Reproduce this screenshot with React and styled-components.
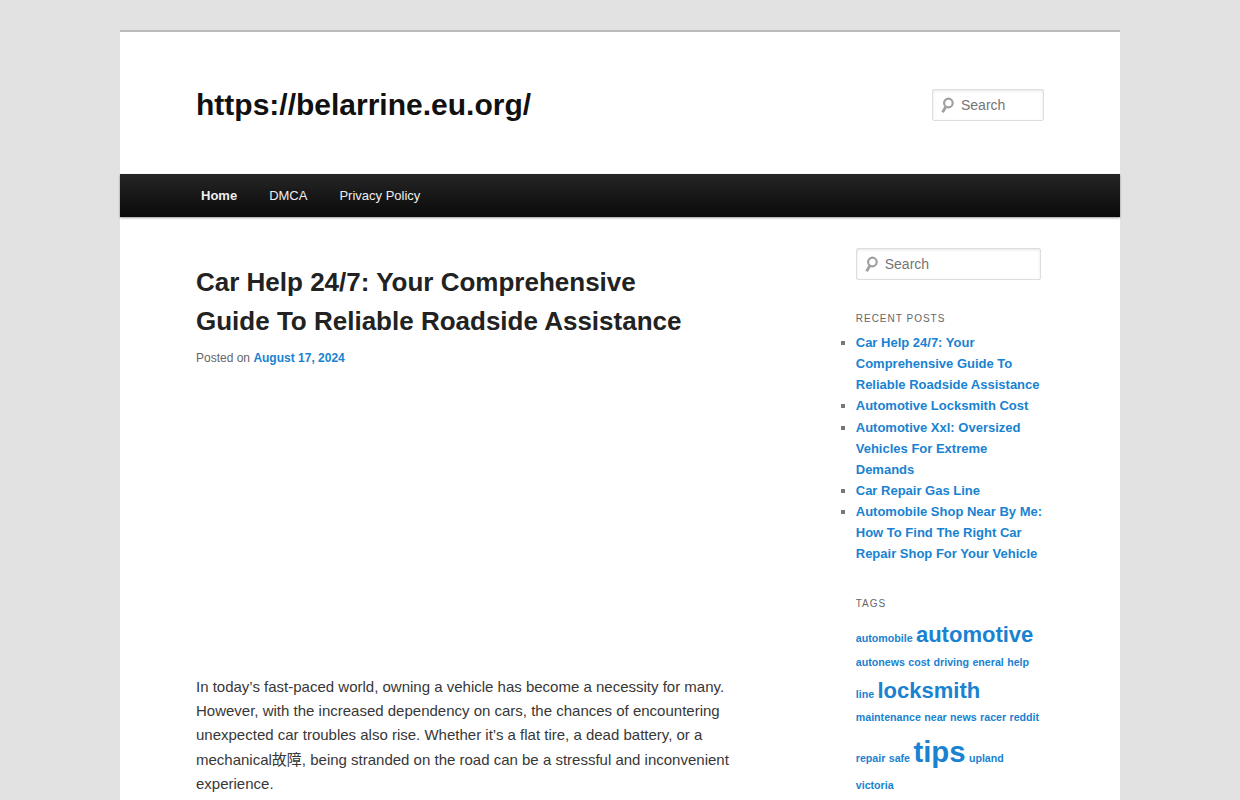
import styled, { createGlobalStyle } from "styled-components";

const recentPosts = [
  "Car Help 24/7: Your Comprehensive Guide To Reliable Roadside Assistance",
  "Automotive Locksmith Cost",
  "Automotive Xxl: Oversized Vehicles For Extreme Demands",
  "Car Repair Gas Line",
  "Automobile Shop Near By Me: How To Find The Right Car Repair Shop For Your Vehicle",
];

// sizes are in pt, the way the tag cloud weighs its terms
const tags = [
  { name: "automobile", size: 8 },
  { name: "automotive", size: 16.5 },
  { name: "autonews", size: 8 },
  { name: "cost", size: 8 },
  { name: "driving", size: 8 },
  { name: "eneral", size: 8 },
  { name: "help", size: 8 },
  { name: "line", size: 8 },
  { name: "locksmith", size: 16.5 },
  { name: "maintenance", size: 8 },
  { name: "near", size: 8 },
  { name: "news", size: 8 },
  { name: "racer", size: 8 },
  { name: "reddit", size: 8 },
  { name: "repair", size: 8 },
  { name: "safe", size: 8 },
  { name: "tips", size: 22 },
  { name: "upland", size: 8 },
  { name: "victoria", size: 8 },
];

const GlobalStyle = createGlobalStyle`
  * {
    box-sizing: border-box;
  }

  body {
    margin: 0;
    padding: 0 30px;
    background: #e2e2e2;
    color: #373737;
    font-family: "Liberation Sans", Arial, "Noto Sans CJK SC", sans-serif;
    font-size: 15px;
    line-height: 1.625;
  }
`;

const Page = styled.div`
  max-width: 1000px;
  margin: 30px auto;
  background: #fff;
`;

const Branding = styled.header`
  display: flex;
  justify-content: space-between;
  align-items: flex-start;
  padding: 55px 7.6% 51px;
  border-top: 2px solid #bbb;
`;

const SiteTitle = styled.h1`
  margin: 0;
  font-size: 30px;
  line-height: 36px;

  a {
    color: #111;
    text-decoration: none;
  }
`;

const SearchForm = styled.form`
  display: grid;
  align-items: center;
  width: ${(props) => props.$width};
  margin-top: ${(props) => props.$top || "0"};
`;

const SearchIcon = styled.svg`
  grid-area: 1 / 1;
  margin-left: 9px;
  pointer-events: none;
`;

const SearchInput = styled.input`
  grid-area: 1 / 1;
  width: 100%;
  height: 32px;
  padding: 4px 10px 4px 28px;
  border: 1px solid #ddd;
  border-radius: 2px;
  background: #fff;
  box-shadow: inset 0 1px 3px rgba(0, 0, 0, 0.1);
  color: #373737;
  font-family: inherit;
  font-size: 14px;

  &::placeholder {
    color: #757575;
  }
`;

const Nav = styled.nav`
  position: relative;
  padding: 0 7.6%;
  background: linear-gradient(#252525, #0a0a0a);
  box-shadow: rgba(0, 0, 0, 0.4) 0 1px 2px;
`;

const Menu = styled.ul`
  display: flex;
  margin: 0 0 0 -11px;
  padding: 0;
  list-style: none;
`;

const MenuLink = styled.a`
  display: block;
  padding: 0 16px;
  color: #eee;
  font-size: 13px;
  font-weight: ${(props) => (props.$current ? "bold" : "normal")};
  line-height: 43px;
  text-decoration: none;
`;

const Main = styled.div`
  display: flex;
  justify-content: space-between;
  padding: 31px 7.6% 24px;
`;

const Article = styled.article`
  width: 69%;
  padding-top: 15px;
`;

const EntryTitle = styled.h2`
  margin: 0;
  padding-right: 76px;
  color: #222;
  font-size: 26px;
  line-height: 39px;
`;

const EntryMeta = styled.div`
  margin-top: 5px;
  color: #666;
  font-size: 12px;
  line-height: 24px;
`;

const Link = styled.a`
  color: #1982d1;
  font-weight: bold;
  text-decoration: none;

  &:hover {
    text-decoration: underline;
  }
`;

const Video = styled.div`
  aspect-ratio: 2;
  margin: 0 0 12px;
`;

const Paragraph = styled.p`
  margin: 0 0 24px;
`;

const Sidebar = styled.aside`
  width: 22.2%;
  font-size: 13px;
`;

const Widget = styled.section`
  margin-top: 28px;

  & + & {
    margin-top: 29px;
  }
`;

const WidgetTitle = styled.h3`
  margin: 0 0 3px;
  color: #666;
  font-size: 10px;
  font-weight: 500;
  letter-spacing: 1px;
  line-height: 21px;
  text-transform: uppercase;
`;

const PostList = styled.ul`
  margin: 0;
  padding: 0;
  color: #777;
  list-style: square;
`;

const TagCloud = styled.div`
  font-size: 12px;
`;

const TagLink = styled(Link)`
  font-size: ${(props) => props.$size}pt;
`;

function Search({ id, width, top }) {
  return (
    <SearchForm role="search" $width={width} $top={top}>
      <SearchInput id={id} type="text" placeholder="Search" aria-label="Search" />
      <SearchIcon width="14" height="18" viewBox="0 0 14 18" fill="none" stroke="#a0a0a0">
        <circle cx="7.4" cy="7" r="4.3" strokeWidth="2.2" />
        <path d="M5 10.6 L1.6 16.2" strokeWidth="2.8" />
      </SearchIcon>
    </SearchForm>
  );
}

export default function App() {
  return (
    <>
      <GlobalStyle />
      <Page>
        <Branding>
          <SiteTitle>
            <a href="#home">https://belarrine.eu.org/</a>
          </SiteTitle>
          <Search id="header-search" width="112px" top="2px" />
        </Branding>

        <Nav>
          <Menu>
            <li><MenuLink href="#home" $current>Home</MenuLink></li>
            <li><MenuLink href="#dmca">DMCA</MenuLink></li>
            <li><MenuLink href="#privacy">Privacy Policy</MenuLink></li>
          </Menu>
        </Nav>

        <Main>
          <Article>
            <EntryTitle>
              Car Help 24/7: Your Comprehensive Guide To Reliable Roadside Assistance
            </EntryTitle>
            <EntryMeta>
              Posted on <Link href="#date">August 17, 2024</Link>
            </EntryMeta>
            <Video />
            <Paragraph>
              In today’s fast-paced world, owning a vehicle has become a necessity for many.
              However, with the increased dependency on cars, the chances of encountering
              unexpected car troubles also rise. Whether it’s a flat tire, a dead battery, or a
              mechanical故障, being stranded on the road can be a stressful and inconvenient
              experience.
            </Paragraph>
          </Article>

          <Sidebar>
            <Search id="sidebar-search" width="185px" />
            <Widget>
              <WidgetTitle>Recent Posts</WidgetTitle>
              <PostList>
                {recentPosts.map((title) => (
                  <li key={title}><Link href="#post">{title}</Link></li>
                ))}
              </PostList>
            </Widget>
            <Widget>
              <WidgetTitle>Tags</WidgetTitle>
              <TagCloud>
                {tags.map((tag) => (
                  <span key={tag.name}>
                    <TagLink href="#tag" $size={tag.size}>{tag.name}</TagLink>{" "}
                  </span>
                ))}
              </TagCloud>
            </Widget>
          </Sidebar>
        </Main>
      </Page>
    </>
  );
}
